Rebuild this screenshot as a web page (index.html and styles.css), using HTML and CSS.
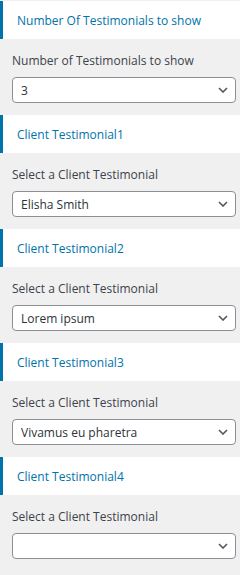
FILE: index.html
```html
<!DOCTYPE html>
<html>
<head>
<meta charset="utf-8">
<link rel="stylesheet" href="styles.css">
</head>
<body>
<div class="panel">
  <section class="group">
    <h3 class="group-title">Number Of Testimonials to show</h3>
    <div class="group-body">
      <label class="field-label">Number of Testimonials to show</label>
      <div class="select-wrap">
        <select class="select"><option>3</option></select>
        <svg class="chev" width="10" height="6" viewBox="0 0 10 6"><path d="M1 1l4 4 4-4" fill="none" stroke="#50575e" stroke-width="1.6"/></svg>
      </div>
    </div>
  </section>
  <section class="group">
    <h3 class="group-title">Client Testimonial1</h3>
    <div class="group-body">
      <label class="field-label">Select a Client Testimonial</label>
      <div class="select-wrap">
        <select class="select"><option>Elisha Smith</option></select>
        <svg class="chev" width="10" height="6" viewBox="0 0 10 6"><path d="M1 1l4 4 4-4" fill="none" stroke="#50575e" stroke-width="1.6"/></svg>
      </div>
    </div>
  </section>
  <section class="group">
    <h3 class="group-title">Client Testimonial2</h3>
    <div class="group-body">
      <label class="field-label">Select a Client Testimonial</label>
      <div class="select-wrap">
        <select class="select"><option>Lorem ipsum</option></select>
        <svg class="chev" width="10" height="6" viewBox="0 0 10 6"><path d="M1 1l4 4 4-4" fill="none" stroke="#50575e" stroke-width="1.6"/></svg>
      </div>
    </div>
  </section>
  <section class="group">
    <h3 class="group-title">Client Testimonial3</h3>
    <div class="group-body">
      <label class="field-label">Select a Client Testimonial</label>
      <div class="select-wrap">
        <select class="select"><option>Vivamus eu pharetra</option></select>
        <svg class="chev" width="10" height="6" viewBox="0 0 10 6"><path d="M1 1l4 4 4-4" fill="none" stroke="#50575e" stroke-width="1.6"/></svg>
      </div>
    </div>
  </section>
  <section class="group">
    <h3 class="group-title">Client Testimonial4</h3>
    <div class="group-body">
      <label class="field-label">Select a Client Testimonial</label>
      <div class="select-wrap">
        <select class="select"><option></option></select>
        <svg class="chev" width="10" height="6" viewBox="0 0 10 6"><path d="M1 1l4 4 4-4" fill="none" stroke="#50575e" stroke-width="1.6"/></svg>
      </div>
    </div>
  </section>
</div>
</body>
</html>
```
FILE: styles.css
```css
html, body {
  margin: 0;
  padding: 0;
  background: #f0f0f1;
}
body {
  font-family: "Open Sans", "Noto Sans", sans-serif;
  font-size: 12px;
  color: #3c434a;
}
.panel {
  padding-top: 1px;
}
.group-title {
  margin: 0;
  height: 38px;
  display: flex;
  align-items: center;
  background: #fff;
  border-left: 3px solid #0073aa;
  padding-left: 14px;
  font-size: 12px;
  font-weight: 400;
  color: #0073aa;
}
.group-body {
  padding: 12px 4px 12px 12px;
  display: flex;
  flex-direction: column;
}
.field-label {
  display: block;
  line-height: 20px;
  margin-bottom: 6px;
  color: #3c434a;
}
.select-wrap {
  position: relative;
}
.select {
  -webkit-appearance: none;
  appearance: none;
  display: block;
  width: 100%;
  height: 26px;
  box-sizing: border-box;
  margin: 0;
  padding: 0 24px 0 8px;
  border: 1px solid #8c8f94;
  border-radius: 4px;
  background: #fff;
  font-family: inherit;
  font-size: 12px;
  color: #2c3338;
}
.chev {
  position: absolute;
  right: 8px;
  top: 10px;
  pointer-events: none;
}
```
